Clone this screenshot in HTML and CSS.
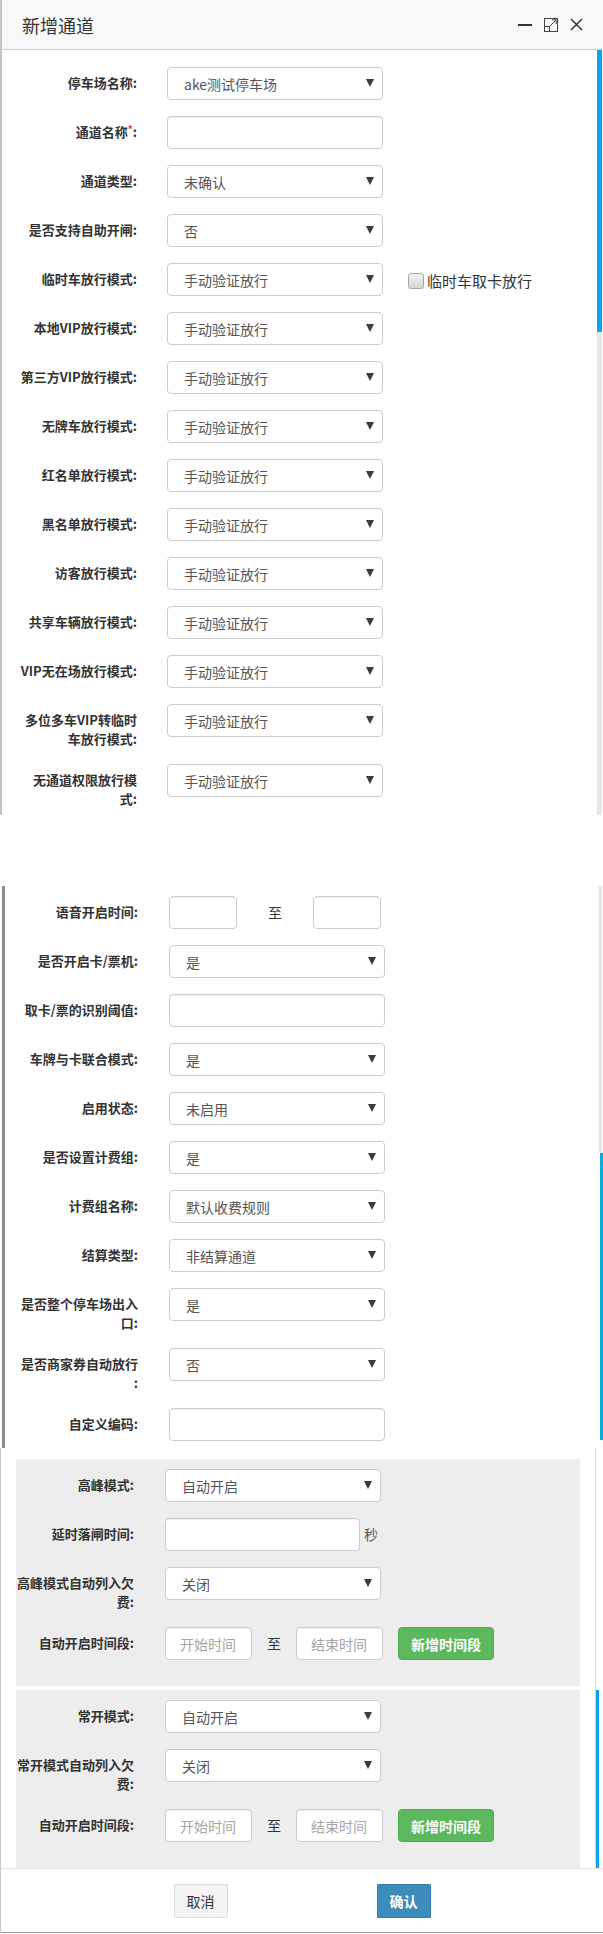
FILE: index.html
```html
<!DOCTYPE html>
<html lang="zh-CN">
<head>
<meta charset="utf-8">
<title>新增通道</title>
<link rel="stylesheet" href="styles.css">
</head>
<body>
<div class="page">

  <section class="panel panel-top">
    <header class="dlg-head">
      <h1 class="dlg-title">新增通道</h1>
      <div class="dlg-tools">
        <svg class="ico" width="14" height="14" viewBox="0 0 14 14"><rect x="0" y="6" width="14" height="2" fill="#333"/></svg>
        <svg class="ico" width="14" height="14" viewBox="0 0 14 14" fill="none" stroke="#444" stroke-width="1"><rect x="0.5" y="0.5" width="13" height="13"/><rect x="0.5" y="8.5" width="5" height="5"/><path d="M6 8 L12 2 M8 1.8 H12.2 V6"/></svg>
        <svg class="ico" width="13" height="13" viewBox="0 0 13 13" fill="none" stroke="#333" stroke-width="1.5"><path d="M1 1 L12 12 M12 1 L1 12"/></svg>
      </div>
    </header>
    <div class="form form-a">
      <div class="row"><label class="lbl">停车场名称:</label><div class="sel"><select class="ctl"><option>ake测试停车场</option></select></div></div>
      <div class="row"><label class="lbl">通道名称<span class="req">*</span>:</label><input class="ctl" type="text"></div>
      <div class="row"><label class="lbl">通道类型:</label><div class="sel"><select class="ctl"><option>未确认</option></select></div></div>
      <div class="row"><label class="lbl">是否支持自助开闸:</label><div class="sel"><select class="ctl"><option>否</option></select></div></div>
      <div class="row"><label class="lbl">临时车放行模式:</label><div class="sel"><select class="ctl"><option>手动验证放行</option></select></div>
        <label class="chk"><span class="chk-box"></span>临时车取卡放行</label></div>
      <div class="row"><label class="lbl">本地VIP放行模式:</label><div class="sel"><select class="ctl"><option>手动验证放行</option></select></div></div>
      <div class="row"><label class="lbl">第三方VIP放行模式:</label><div class="sel"><select class="ctl"><option>手动验证放行</option></select></div></div>
      <div class="row"><label class="lbl">无牌车放行模式:</label><div class="sel"><select class="ctl"><option>手动验证放行</option></select></div></div>
      <div class="row"><label class="lbl">红名单放行模式:</label><div class="sel"><select class="ctl"><option>手动验证放行</option></select></div></div>
      <div class="row"><label class="lbl">黑名单放行模式:</label><div class="sel"><select class="ctl"><option>手动验证放行</option></select></div></div>
      <div class="row"><label class="lbl">访客放行模式:</label><div class="sel"><select class="ctl"><option>手动验证放行</option></select></div></div>
      <div class="row"><label class="lbl">共享车辆放行模式:</label><div class="sel"><select class="ctl"><option>手动验证放行</option></select></div></div>
      <div class="row"><label class="lbl">VIP无在场放行模式:</label><div class="sel"><select class="ctl"><option>手动验证放行</option></select></div></div>
      <div class="row"><label class="lbl">多位多车VIP转临时车放行模式:</label><div class="sel"><select class="ctl"><option>手动验证放行</option></select></div></div>
      <div class="row"><label class="lbl">无通道权限放行模式:</label><div class="sel"><select class="ctl"><option>手动验证放行</option></select></div></div>
    </div>
    <div class="sb sb-a-thumb"></div>
    <div class="sb sb-a-track"></div>
  </section>

  <section class="panel panel-mid">
    <div class="form form-b">
      <div class="row"><label class="lbl">语音开启时间:</label>
        <div class="range"><input class="ctl ctl-xs" type="text"><span class="to">至</span><input class="ctl ctl-xs" type="text"></div></div>
      <div class="row"><label class="lbl">是否开启卡/票机:</label><div class="sel"><select class="ctl"><option>是</option></select></div></div>
      <div class="row"><label class="lbl">取卡/票的识别阈值:</label><input class="ctl" type="text"></div>
      <div class="row"><label class="lbl">车牌与卡联合模式:</label><div class="sel"><select class="ctl"><option>是</option></select></div></div>
      <div class="row"><label class="lbl">启用状态:</label><div class="sel"><select class="ctl"><option>未启用</option></select></div></div>
      <div class="row"><label class="lbl">是否设置计费组:</label><div class="sel"><select class="ctl"><option>是</option></select></div></div>
      <div class="row"><label class="lbl">计费组名称:</label><div class="sel"><select class="ctl"><option>默认收费规则</option></select></div></div>
      <div class="row"><label class="lbl">结算类型:</label><div class="sel"><select class="ctl"><option>非结算通道</option></select></div></div>
      <div class="row"><label class="lbl">是否整个停车场出入口:</label><div class="sel"><select class="ctl"><option>是</option></select></div></div>
      <div class="row"><label class="lbl">是否商家券自动放行<wbr>:</label><div class="sel"><select class="ctl"><option>否</option></select></div></div>
      <div class="row"><label class="lbl">自定义编码:</label><input class="ctl" type="text"></div>
    </div>
    <div class="sb sb-b-track"></div>
    <div class="sb sb-b-thumb"></div>
  </section>

  <section class="panel panel-low">
    <div class="box">
      <div class="row"><label class="lbl">高峰模式:</label><div class="sel"><select class="ctl"><option>自动开启</option></select></div></div>
      <div class="row"><label class="lbl">延时落闸时间:</label><input class="ctl ctl-md" type="text"><span class="unit">秒</span></div>
      <div class="row"><label class="lbl">高峰模式自动列入欠费:</label><div class="sel"><select class="ctl"><option>关闭</option></select></div></div>
      <div class="row"><label class="lbl">自动开启时间段:</label>
        <div class="range range-t"><input class="ctl ctl-sm" type="text" placeholder="开始时间"><span class="to">至</span><input class="ctl ctl-sm" type="text" placeholder="结束时间"><button class="btn-add" type="button">新增时间段</button></div></div>
    </div>
    <div class="box">
      <div class="row"><label class="lbl">常开模式:</label><div class="sel"><select class="ctl"><option>自动开启</option></select></div></div>
      <div class="row"><label class="lbl">常开模式自动列入欠费:</label><div class="sel"><select class="ctl"><option>关闭</option></select></div></div>
      <div class="row"><label class="lbl">自动开启时间段:</label>
        <div class="range range-t"><input class="ctl ctl-sm" type="text" placeholder="开始时间"><span class="to">至</span><input class="ctl ctl-sm" type="text" placeholder="结束时间"><button class="btn-add" type="button">新增时间段</button></div></div>
    </div>
    <footer class="dlg-foot">
      <button class="btn btn-cancel" type="button">取消</button>
      <button class="btn btn-ok" type="button">确认</button>
    </footer>
    <div class="sb sb-c-line"></div>
    <div class="sb sb-c-thumb"></div>
  </section>

</div>
</body>
</html>
```

FILE: styles.css
```css
* { box-sizing: border-box; }

body {
  margin: 0;
  background: #fff;
  font-family: "Microsoft YaHei", "Noto Sans CJK SC", sans-serif;
  color: #333;
}

.page { width: 603px; }

.panel { position: relative; overflow: hidden; }

/* ---------- top panel ---------- */
.panel-top {
  height: 815px;
  border-left: 2px solid #c4c4c4;
}

.dlg-head {
  height: 50px;
  background: #f8f8f8;
  border-bottom: 1px solid #cfcfcf;
  display: flex;
  align-items: center;
  padding: 0 20px 0 20px;
}

.dlg-title {
  margin: 0;
  font-size: 18px;
  font-weight: 400;
  color: #333;
  line-height: 24px;
}

.dlg-tools {
  margin-left: auto;
  display: flex;
  align-items: center;
  gap: 12px;
}

.ico { display: block; }

.form-a { padding: 17px 0 0 17px; }

/* ---------- rows ---------- */
.row {
  display: flex;
  align-items: flex-start;
  margin-bottom: 16px;
}

.lbl {
  flex: none;
  width: 118px;
  margin-right: 30px;
  padding-top: 7px;
  text-align: right;
  font-size: 13px;
  font-weight: 700;
  line-height: 18.57px;
  color: #333;
}

.req {
  color: #e33;
  font-size: 10px;
  vertical-align: top;
  line-height: 12px;
}

.ctl {
  display: block;
  width: 216px;
  height: 33px;
  margin: 0;
  border: 1px solid #ccc;
  border-radius: 4px;
  background: #fff;
  box-shadow: inset 0 1px 1px rgba(0, 0, 0, 0.075);
  font-family: "Microsoft YaHei", "Noto Sans CJK SC", sans-serif;
  font-size: 14px;
  color: #555;
  padding: 0 14px 0 16px;
  outline: none;
}

select.ctl {
  -webkit-appearance: none;
  appearance: none;
  box-shadow: none;
}

.ctl::placeholder { color: #a5a5a5; }

.sel { position: relative; flex: none; }

.sel::after {
  content: "";
  position: absolute;
  right: 9px;
  top: 12px;
  width: 0;
  height: 0;
  border-left: 4px solid transparent;
  border-right: 4px solid transparent;
  border-top: 8px solid #3b3b3b;
  pointer-events: none;
}

.chk {
  display: flex;
  align-items: center;
  height: 33px;
  margin-left: 25px;
  font-size: 15px;
  color: #333;
  padding-top: 2px;
}

.chk-box {
  width: 16px;
  height: 16px;
  margin-right: 3px;
  border: 1px solid #a8a8a8;
  border-radius: 3px;
  background: linear-gradient(#f3f3f3, #d6d6d6);
}

/* ---------- middle panel ---------- */
.panel-mid {
  margin-top: 71px;
  margin-left: 2px;
  height: 562px;
  border-left: 3px solid #8c8c8c;
}

.form-b { padding: 10px 0 0 15px; }
.form-b .lbl { margin-right: 31px; }

.range {
  display: flex;
  align-items: center;
}

.ctl-xs { width: 68px; }

.to {
  font-size: 14px;
  color: #333;
  line-height: 33px;
}

.form-b .range .to { margin: 0 31px; }

/* ---------- lower panel ---------- */
.panel-low {
  border-left: 1px solid #c8c8c8;
}

.box {
  margin: 11px 0 0 15px;
  width: 564px;
  background: #ededed;
  padding: 10px 0 10px 0;
}

.box + .box { margin-top: 4px; }

.box .lbl { margin-right: 31px; }

.ctl-md { width: 195px; }

.unit {
  margin-left: 4px;
  font-size: 14px;
  line-height: 33px;
  color: #555;
}

.ctl-sm { width: 87px; padding: 0 10px 0 14px; }

.range-t .to { margin: 0 15px; }

.btn-add {
  margin-left: 15px;
  width: 96px;
  height: 33px;
  border: 1px solid #4cae4c;
  border-radius: 4px;
  background: #5cb85c;
  color: #fff;
  font-family: "Microsoft YaHei", "Noto Sans CJK SC", sans-serif;
  font-size: 14px;
  font-weight: 700;
  padding: 0;
}

/* ---------- footer ---------- */
.dlg-foot {
  border-top: 1px solid #e3e3e3;
  border-bottom: 1px solid #9a9a9a;
  padding: 15px 0 14px;
  display: flex;
  justify-content: center;
  gap: 149px;
  background: #fff;
  position: relative;
  z-index: 1;
}

.btn {
  width: 54px;
  height: 34px;
  font-family: "Microsoft YaHei", "Noto Sans CJK SC", sans-serif;
  font-size: 14px;
  padding: 0;
  border-radius: 1px;
}

.btn-cancel {
  background: #f4f4f4;
  border: 1px solid #dcdcdc;
  color: #333;
}

.btn-ok {
  background: #3c8dbc;
  border: 1px solid #367fa9;
  color: #fff;
  font-weight: 700;
}

/* ---------- scrollbars (overlay) ---------- */
.sb { position: absolute; }

.sb-a-thumb { right: 1px; top: 50px; width: 5px; height: 282px; background: #0aa6ec; }
.sb-a-track { right: 1px; top: 332px; width: 5px; bottom: 0; background: #e8e8e8; }

.sb-b-track { right: 1px; top: 0; width: 3px; height: 267px; background: #e2e2e2; }
.sb-b-thumb { right: 0; top: 267px; width: 3px; bottom: 8px; background: #0aa6ec; }

.sb-c-line { right: 7px; top: 0; bottom: 0; width: 1px; background: #d8d8d8; }
.sb-c-thumb { right: 4px; top: 242px; width: 3px; height: 178px; background: #0aa6ec; z-index: 2; }
```
